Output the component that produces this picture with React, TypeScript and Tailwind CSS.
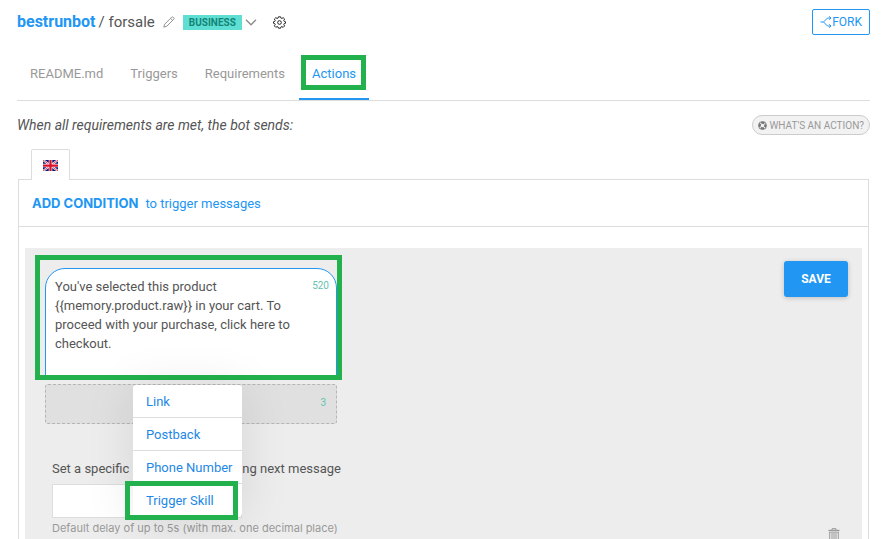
import React from "react";

const tabs = ["README.md", "Triggers", "Requirements", "Actions"];
const menuItems = ["Link", "Postback", "Phone Number", "Trigger Skill"];

function Highlight({ className }: { className: string }) {
  return (
    <span
      aria-hidden="true"
      className={`pointer-events-none absolute border-5 border-[#22b14c] ${className}`}
    />
  );
}

function PencilIcon() {
  return (
    <svg width="12" height="12" viewBox="0 0 12 12" fill="none" stroke="#888" strokeWidth="0.9" strokeLinejoin="round">
      <path d="M0.8 11.2 L1.7 8.2 L8.7 1.2 Q9.4 0.5 10.1 1.1 L10.8 1.8 Q11.4 2.5 10.8 3.2 L3.8 10.2 Z" />
      <path d="M7.6 2.4 L9.7 4.4" />
    </svg>
  );
}

function ChevronIcon() {
  return (
    <svg width="12" height="7" viewBox="0 0 12 7" fill="none" stroke="#8a8a8a" strokeWidth="1.3">
      <path d="M1 0.8 L6 5.8 L11 0.8" />
    </svg>
  );
}

function GearIcon() {
  return (
    <svg width="13" height="13" viewBox="0 0 24 24" fill="none" stroke="#222" strokeWidth="1.8" strokeLinejoin="round">
      <path d="M10 1.5h4l.6 2.3 1.8.8 2.400-1.600 2.700 2.700-1.600 2.400.8 1.800 2.300.6v3l-2.300.6-.8 1.800 1.600 2.400-2.700 2.700-2.400-1.600-1.800.8-.6 2.300h-4l-.6-2.300-1.800-.8-2.400 1.600-2.700-2.700 1.600-2.400-.8-1.800L1 13.500v-3l2.300-.6.8-1.800-1.600-2.400 2.700-2.700 2.400 1.600 1.800-.8z" />
      <circle cx="12" cy="12" r="3.400" />
    </svg>
  );
}

function ForkIcon() {
  return (
    <svg width="12" height="12" viewBox="0 0 12 12" fill="none" stroke="#2196f3" strokeWidth="1">
      <path d="M0.500 6 H3.500 L7.500 2 H10.500 M3.500 6 L7.500 10 H10.500" />
      <path d="M9.200 0.300 L11 2 L9.200 3.700 M9.200 8.300 L11 10 L9.200 11.700" />
    </svg>
  );
}

function LifebuoyIcon() {
  return (
    <svg width="9" height="9" viewBox="0 0 18 18" fill="none">
      <circle cx="9" cy="9" r="8" stroke="#777" strokeWidth="1.800" />
      <circle cx="9" cy="9" r="5.400" stroke="#777" strokeWidth="4.200" strokeDasharray="6.480 2" strokeDashoffset="3.240" />
    </svg>
  );
}

function UkFlag() {
  return (
    <svg width="15" height="11" viewBox="0 0 30 22" role="img" aria-label="English">
      <rect width="30" height="22" fill="#0a1a7a" />
      <path d="M0 0 L30 22 M30 0 L0 22" stroke="#fff" strokeWidth="4" />
      <path d="M0 0 L30 22 M30 0 L0 22" stroke="#dc1428" strokeWidth="1.600" />
      <path d="M15 0 V22 M0 11 H30" stroke="#fff" strokeWidth="7" />
      <path d="M15 0 V22 M0 11 H30" stroke="#d8102a" strokeWidth="4.500" />
    </svg>
  );
}

function TrashIcon() {
  return (
    <svg width="12" height="14" viewBox="0 0 12 14" fill="none" stroke="#999">
      <path d="M0.500 2.500 H11.500" strokeWidth="1.400" />
      <path d="M4 2 V0.700 H8 V2" />
      <path d="M1.700 4 V13.300 H10.300 V4 M4 4.500 V12 M6 4.500 V12 M8 4.500 V12" />
      <path d="M1.500 4.300 H10.500" strokeWidth="0.700" />
    </svg>
  );
}

function Header() {
  return (
    <header className="flex items-center justify-between">
      <div className="flex items-center">
        <h1 className="flex gap-[3px] leading-6">
          <a href="#bot" className="text-base font-bold text-[#2196f3]">bestrunbot</a>
          <span className="text-[15px] text-[#555]">/ forsale</span>
        </h1>
        <button type="button" aria-label="Rename skill" className="ml-2">
          <PencilIcon />
        </button>
        <button type="button" className="ml-2 flex items-center gap-[3px]">
          <span className="bg-[#5fdfd3] px-1.5 text-[10px] leading-[15px] font-bold text-[#128577]">BUSINESS</span>
          <ChevronIcon />
        </button>
        <button type="button" aria-label="Skill settings" className="ml-4">
          <GearIcon />
        </button>
      </div>
      <button
        type="button"
        className="flex h-[26px] items-center rounded-xs border border-[#2196f3] px-[7px] text-xs text-[#2196f3]"
      >
        <ForkIcon />
        FORK
      </button>
    </header>
  );
}

function Tabs() {
  return (
    <nav className="mt-3 flex gap-px border-b border-[#ddd]">
      {tabs.map((tab) => {
        const active = tab === "Actions";
        return (
          <a
            key={tab}
            href={`#${tab}`}
            aria-current={active ? "page" : undefined}
            className={`relative border-b-2 px-[13px] pt-[17px] pb-3.5 text-[13px] leading-5 ${
              active ? "border-[#2196f3] text-[#2196f3]" : "border-transparent text-[#999]"
            }`}
          >
            {tab}
            {active && <Highlight className="top-2 left-0.5 h-[35px] w-[65px]" />}
          </a>
        );
      })}
    </nav>
  );
}

function ButtonMenu() {
  return (
    <ul className="absolute top-px left-[88px] w-[109px] rounded-[3px] bg-white shadow-[0_4px_50px_rgba(0,0,0,0.1)]">
      {menuItems.map((item) => (
        <li key={item} className="relative border-b border-[#ddd] last:border-b-0">
          <button
            type="button"
            className="h-8 w-full pt-0.5 pl-[13px] text-left text-[13px] whitespace-nowrap text-[#1e88e5]"
          >
            {item}
          </button>
          {item === "Trigger Skill" && <Highlight className="-top-[3px] -left-2 h-[39px] w-[113px]" />}
        </li>
      ))}
    </ul>
  );
}

function MessageEditor() {
  return (
    <div className="w-[292px]">
      <div className="relative">
        <textarea
          aria-label="Message"
          maxLength={640}
          defaultValue="You've selected this product {{memory.product.raw}} in your cart. To proceed with your purchase, click here to checkout."
          className="block h-28 w-full resize-none overflow-hidden rounded-t-[20px] border border-[#2196f3] bg-white py-2 pr-7 pl-[9px] text-[13px] leading-[19px] text-[#555] outline-none"
        />
        <span className="absolute top-2.5 right-2 text-[10px] leading-[15px] text-[#66c2b0]">520</span>
        <Highlight className="-top-[13px] -left-2.5 h-[125px] w-[307px]" />
      </div>
      <div className="relative mt-1">
        <button
          type="button"
          aria-label="Add button"
          className="flex h-10 w-full items-center justify-end rounded-[3px] border border-dashed border-[#b5b5b5] bg-[#e0e0e0] pr-2.5 pb-1 text-[10px] text-[#66c2b0]"
        >
          3
        </button>
        <ButtonMenu />
      </div>
      <div className="mt-[35px] pl-[7px]">
        <label htmlFor="delay" className="-mr-1 flex justify-between text-[13px] leading-5 whitespace-nowrap text-[#555]">
          <span>Set a specific</span>
          <span>ng next message</span>
        </label>
        <input id="delay" className="mt-[5px] block h-[34px] w-[190px] border border-[#ddd] bg-white px-2 text-[13px]" />
        <p className="mt-0.5 font-[Inter,sans-serif] text-[11px] leading-4 whitespace-nowrap text-[#999]">
          Default delay of up to 5s (with max. one decimal place)
        </p>
      </div>
    </div>
  );
}

export default function App() {
  return (
    <main className="h-screen overflow-hidden bg-white pt-[9px] pr-[13px] pl-[17px] font-[Roboto,sans-serif]">
      <Header />
      <Tabs />
      <div className="mt-3.5 flex items-center justify-between">
        <p className="text-sm text-[#555] italic">When all requirements are met, the bot sends:</p>
        <button
          type="button"
          className="flex h-5 items-center gap-0.5 rounded-full border border-[#ccc] bg-[#f2f2f2] px-[5px] text-[10px] text-[#999]"
        >
          <LifebuoyIcon />
          WHAT'S AN ACTION?
        </button>
      </div>
      <div className="mt-3.5 mr-px ml-px">
        <div className="flex pl-[13px]">
          <button
            type="button"
            className="relative -mb-px flex h-[31px] w-[39px] items-center justify-center rounded-t-xs border border-b-0 border-[#ddd] bg-white"
          >
            <UkFlag />
          </button>
        </div>
        <section className="border border-[#ddd]">
          <div className="flex h-[47px] items-center gap-[7px] border-b border-[#ddd] px-[13px] pt-0.5 text-[13px] text-[#2196f3]">
            <button type="button" className="font-[Inter,sans-serif] font-bold">ADD CONDITION</button>
            <span>to trigger messages</span>
          </div>
          <div className="mx-1.5 mt-[21px] flex justify-between bg-[#ededed]">
            <div className="py-5 pl-5">
              <MessageEditor />
            </div>
            <div className="flex flex-col items-end justify-between pt-[13px] pr-3.5 pb-3.5">
              <button
                type="button"
                className="h-9 w-16 rounded-[3px] bg-[#2196f3] text-xs font-bold text-white shadow-[0_1px_5px_rgba(0,0,0,0.2)]"
              >
                SAVE
              </button>
              <button type="button" aria-label="Delete message" className="mr-2">
                <TrashIcon />
              </button>
            </div>
          </div>
        </section>
      </div>
    </main>
  );
}
